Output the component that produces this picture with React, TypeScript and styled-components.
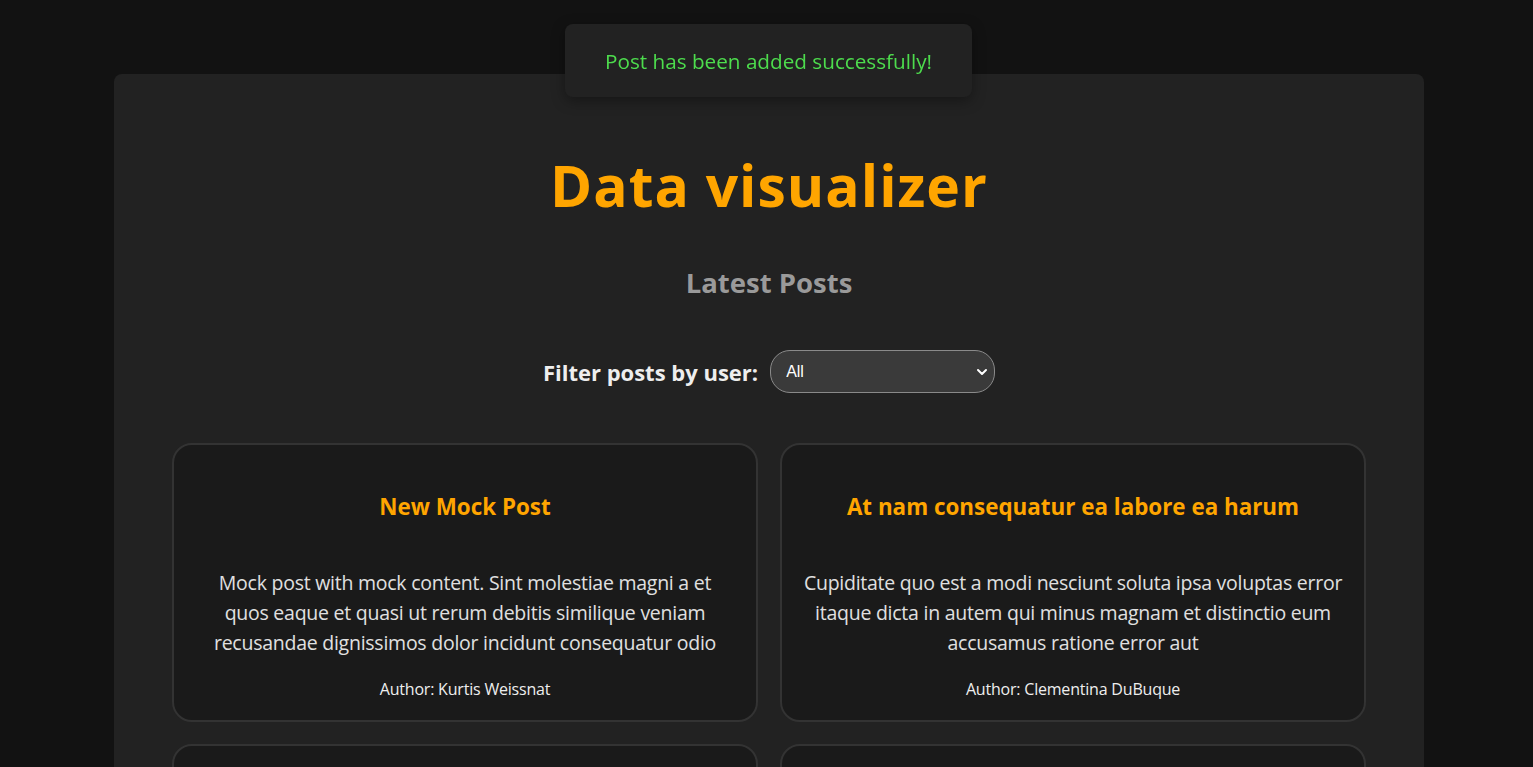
import React from "react";
import styled, { createGlobalStyle } from "styled-components";

const FONT = `"Open Sans", "Noto Sans", sans-serif`;

const GlobalStyle = createGlobalStyle`
  html, body {
    margin: 0;
    padding: 0;
    background: #121212;
    font-family: ${FONT};
    color: #e0e0e0;
  }
  * { box-sizing: border-box; }
`;

const Page = styled.div`
  min-height: 767px;
  padding: 74px 109px 0 114px;
`;

const Container = styled.main`
  background: #222222;
  border-radius: 8px;
  padding: 73px 58px 40px;
  display: flex;
  flex-direction: column;
  align-items: center;
`;

const Toast = styled.div`
  position: fixed;
  top: 24px;
  left: 565px;
  width: 407px;
  height: 73px;
  background: #222222;
  border-radius: 8px;
  box-shadow: 0 4px 14px rgba(0, 0, 0, 0.35);
  color: #4ddc4d;
  font-size: 20.7px;
  display: flex;
  align-items: center;
  justify-content: center;
  z-index: 10;
`;

const Title = styled.h1`
  margin: 0;
  font-size: 57px;
  line-height: 77px;
  letter-spacing: 1px;
  font-weight: 700;
  color: #ffa500;
`;

const Subtitle = styled.h2`
  margin: 42px 0 0;
  font-size: 27.5px;
  line-height: 34px;
  font-weight: 700;
  color: #9a9a9a;
`;

const FilterRow = styled.div`
  margin-top: 50px;
  display: flex;
  align-items: center;
  gap: 12px;
`;

const FilterLabel = styled.label`
  font-size: 22px;
  font-weight: 700;
  color: #eeeeee;
`;

const SelectWrap = styled.div`
  position: relative;
  width: 225px;
  height: 43px;
`;

const Select = styled.select`
  appearance: none;
  width: 100%;
  height: 100%;
  background: #3a3a3a;
  color: #ffffff;
  border: 1px solid #8a8a8a;
  border-radius: 20px;
  padding: 0 30px 0 15px;
  font-family: "Liberation Sans", Arial, sans-serif;
  font-size: 16px;
  outline: none;
`;

const Chevron = styled.svg`
  position: absolute;
  right: 6px;
  top: 15px;
  pointer-events: none;
`;

const Grid = styled.div`
  margin-top: 50px;
  width: 100%;
  display: grid;
  grid-template-columns: 1fr 1fr;
  gap: 22px;
`;

const Card = styled.article`
  background: #1a1a1a;
  border: 2px solid #333333;
  border-radius: 20px;
  padding: 47px 20.75px 19px;
  text-align: center;
`;

const CardTitle = styled.h3`
  margin: 0;
  font-size: 22.4px;
  line-height: 30px;
  font-weight: 700;
  color: #ffa500;
`;

const CardBody = styled.p`
  margin: 46px 0 0;
  font-size: 19.5px;
  letter-spacing: -0.25px;
  line-height: 30px;
  color: #e0e0e0;
`;

const CardAuthor = styled.p`
  margin: 19px 0 0;
  font-size: 16px;
  letter-spacing: -0.2px;
  line-height: 24px;
  color: #eeeeee;
`;

const posts = [
  {
    title: "New Mock Post",
    body: "Mock post with mock content. Sint molestiae magni a et quos eaque et quasi ut rerum debitis similique veniam recusandae dignissimos dolor incidunt consequatur odio",
    author: "Kurtis Weissnat",
  },
  {
    title: "At nam consequatur ea labore ea harum",
    body: "Cupiditate quo est a modi nesciunt soluta ipsa voluptas error itaque dicta in autem qui minus magnam et distinctio eum accusamus ratione error aut",
    author: "Clementina DuBuque",
  },
  {
    title: "Sunt aut facere repellat provident occaecati",
    body: "Quia et suscipit suscipit recusandae consequuntur expedita et cum reprehenderit molestiae ut ut quas totam nostrum rerum est autem sunt rem eveniet architecto",
    author: "Leanne Graham",
  },
  {
    title: "Qui est esse",
    body: "Est rerum tempore vitae sequi sint nihil reprehenderit dolor beatae ea dolores neque fugiat blanditiis voluptate porro vel nihil molestiae ut reiciendis qui aperiam non debitis possimus qui neque nisi nulla",
    author: "Ervin Howell",
  },
];

export default function App() {
  return (
    <>
      <GlobalStyle />
      <Toast>Post has been added successfully!</Toast>
      <Page>
        <Container>
          <Title>Data visualizer</Title>
          <Subtitle>Latest Posts</Subtitle>
          <FilterRow>
            <FilterLabel htmlFor="user-filter">Filter posts by user:</FilterLabel>
            <SelectWrap>
              <Select id="user-filter" defaultValue="all">
                <option value="all">All</option>
                <option value="1">Leanne Graham</option>
                <option value="2">Ervin Howell</option>
              </Select>
              <Chevron width="14" height="14" viewBox="0 0 14 14">
                <path d="M3 5 L7 9 L11 5" fill="none" stroke="#ffffff" strokeWidth="2" strokeLinecap="round" strokeLinejoin="round" />
              </Chevron>
            </SelectWrap>
          </FilterRow>
          <Grid>
            {posts.map((p) => (
              <Card key={p.title}>
                <CardTitle>{p.title}</CardTitle>
                <CardBody>{p.body}</CardBody>
                <CardAuthor>Author: {p.author}</CardAuthor>
              </Card>
            ))}
          </Grid>
        </Container>
      </Page>
    </>
  );
}
